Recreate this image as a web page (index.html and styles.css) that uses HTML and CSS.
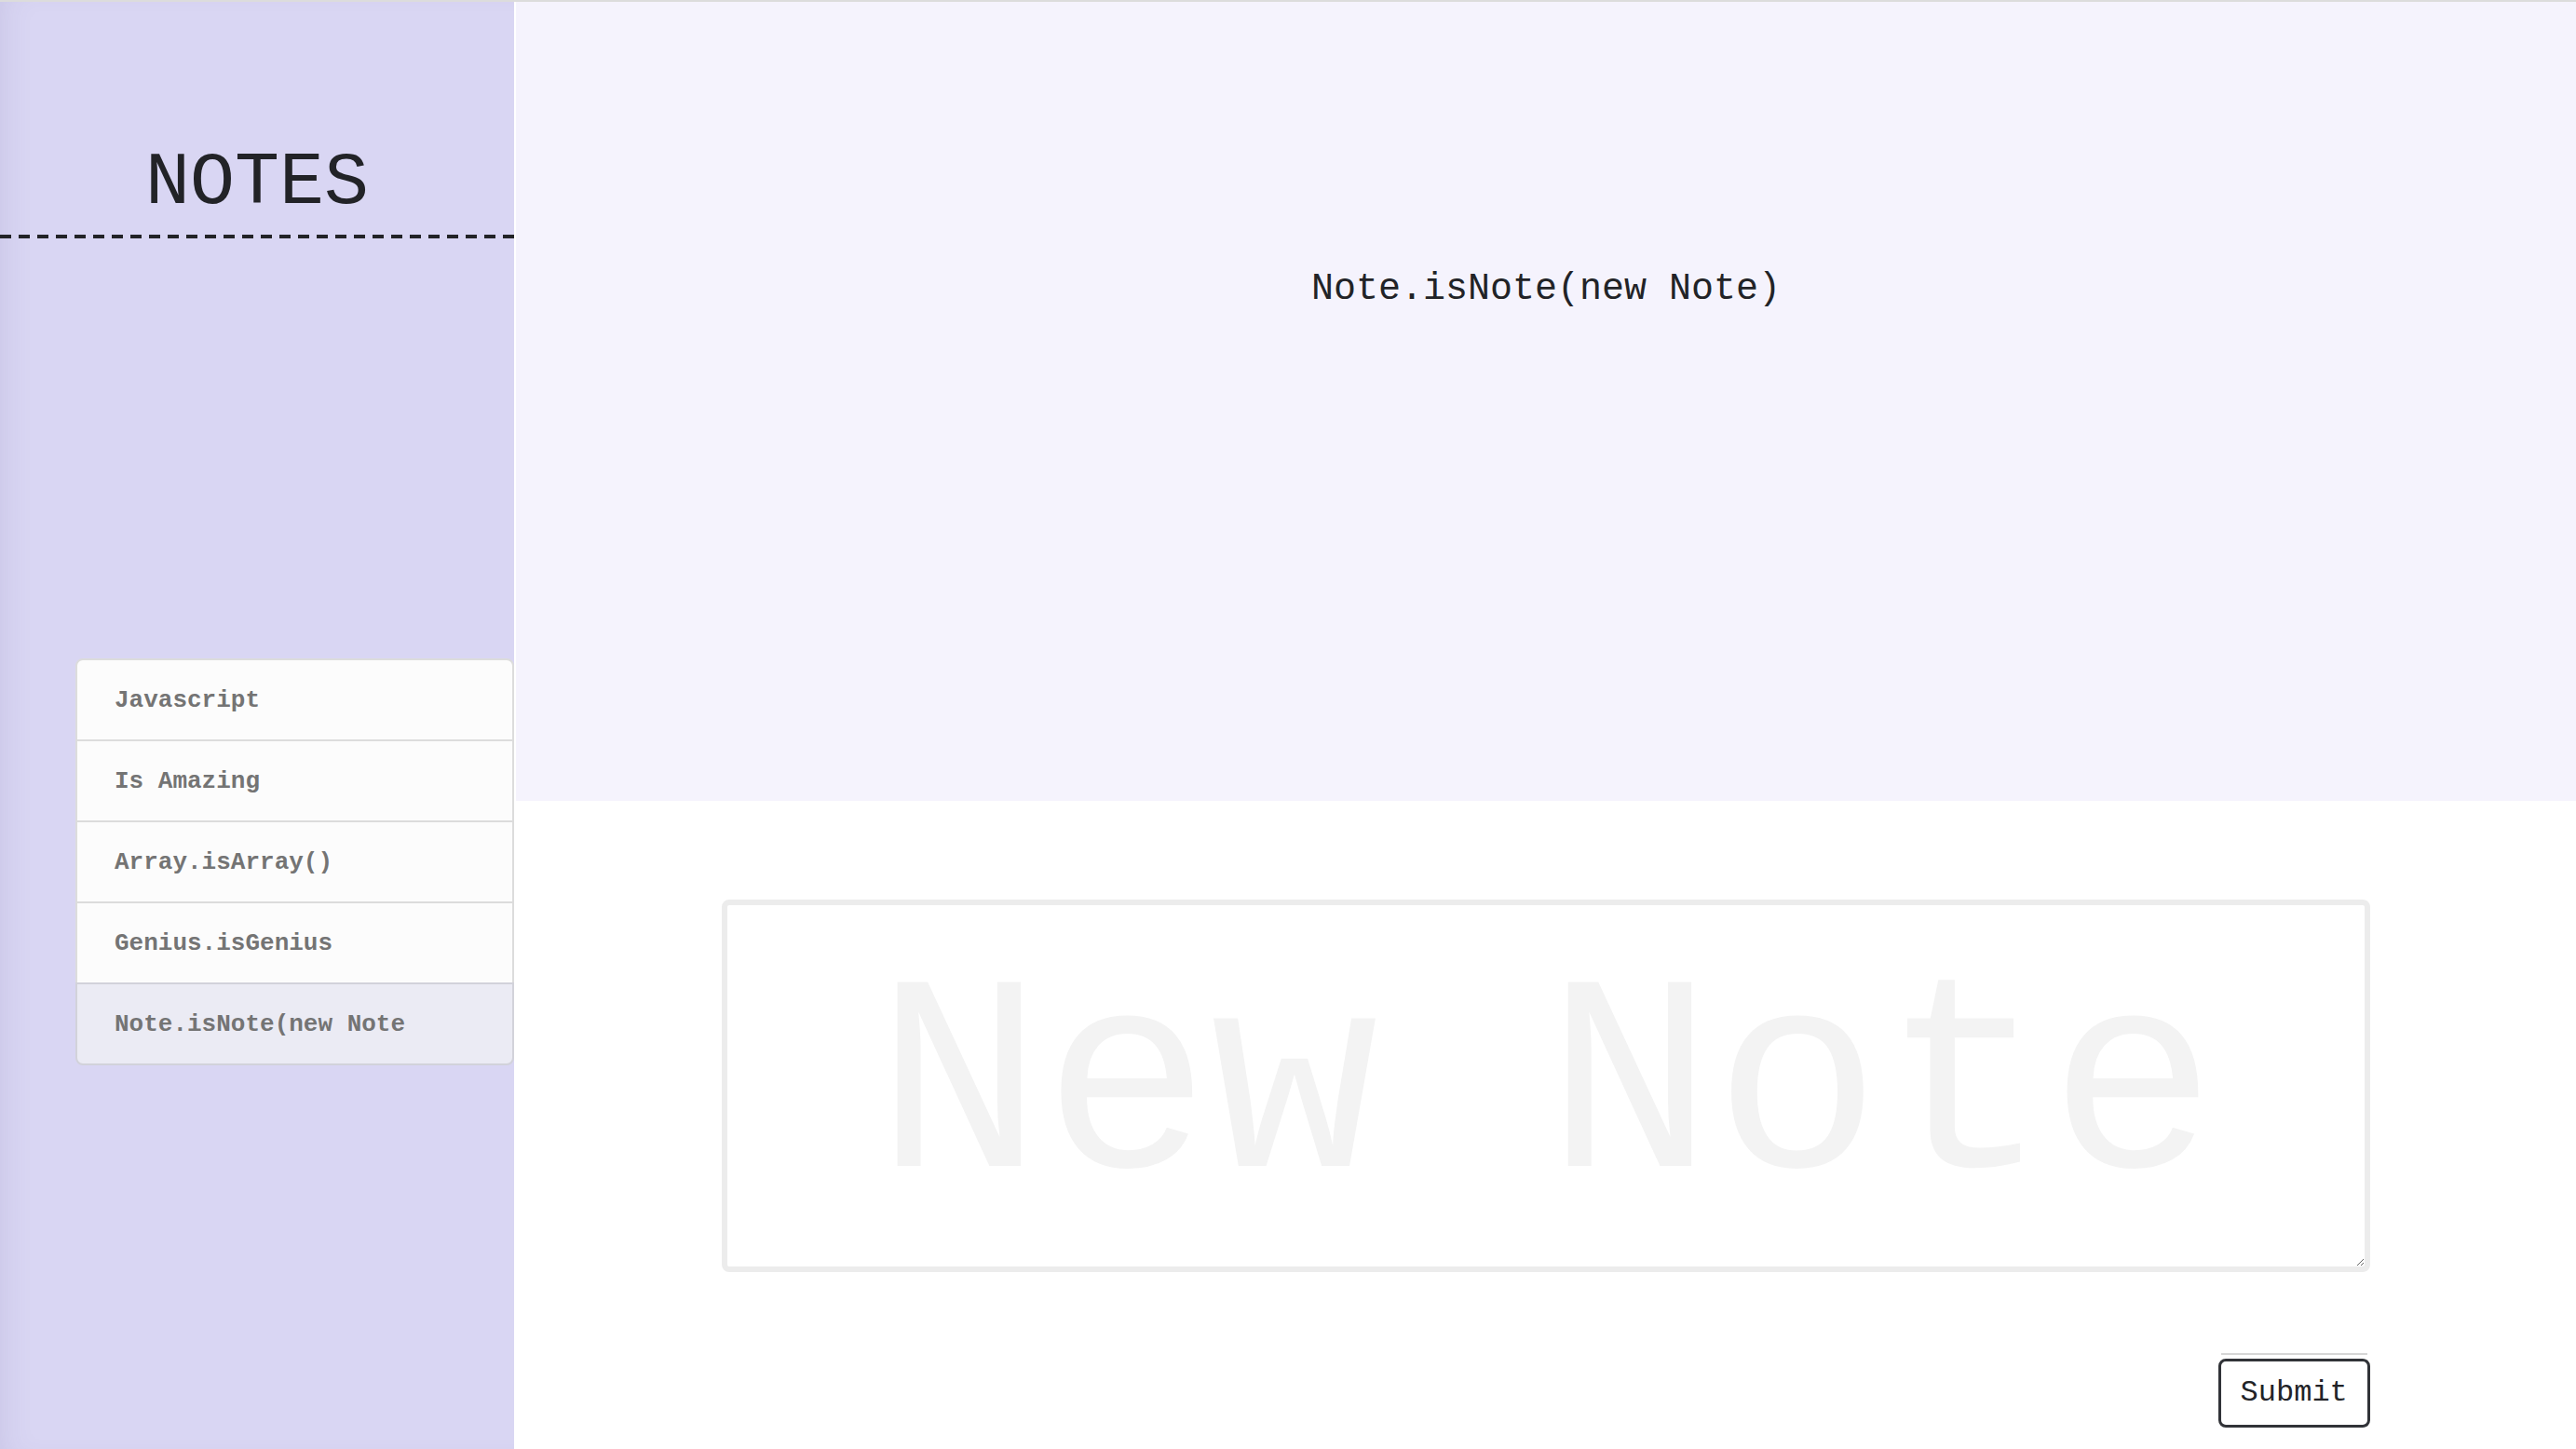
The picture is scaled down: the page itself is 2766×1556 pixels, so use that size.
FILE: index.html
```html
<!DOCTYPE html>
<html lang="en">
<head>
<meta charset="utf-8">
<title>Notes</title>
<link rel="stylesheet" href="styles.css">
</head>
<body>
<div class="app">
  <aside class="sidebar">
    <h1 class="title">NOTES</h1>
    <div class="rule"></div>
    <ul class="note-list">
      <li class="note-item">Javascript</li>
      <li class="note-item">Is Amazing</li>
      <li class="note-item">Array.isArray()</li>
      <li class="note-item">Genius.isGenius</li>
      <li class="note-item active">Note.isNote(new Note</li>
    </ul>
  </aside>
  <main class="main">
    <section class="viewer">
      <p class="viewer-text">Note.isNote(new Note)</p>
    </section>
    <form class="composer">
      <textarea class="composer-input" placeholder="New Note"></textarea>
      <div class="composer-actions">
        <button class="submit-btn" type="button">Submit</button>
      </div>
    </form>
  </main>
</div>
</body>
</html>
```

FILE: styles.css
```css
html, body {
  margin: 0;
  padding: 0;
  height: 100%;
}
body {
  box-sizing: border-box;
  border-top: 2px solid #dcdcdc;
  font-family: "Liberation Mono", "Courier New", monospace;
  color: #222327;
  background: #ffffff;
  overflow: hidden;
}
.app {
  display: flex;
  height: 1554px;
}
.sidebar {
  width: 552px;
  flex: none;
  background: #d9d6f3;
  box-shadow: inset 22px 0 36px -24px rgba(90, 80, 140, 0.16);
}
.title {
  margin: 0;
  padding: 149px 0 9px;
  font-size: 80px;
  line-height: 92px;
  font-weight: normal;
  text-align: center;
  color: #222327;
}
.rule {
  height: 4px;
  background: repeating-linear-gradient(to right, #222327 0 12px, transparent 12px 20px);
}
.note-list {
  list-style: none;
  margin: 451px 0 0 81px;
  padding: 0;
}
.note-item {
  background: #fcfcfc;
  border: 2px solid #dcdcdc;
  margin-bottom: -2px;
  padding: 28px 40px 27px;
  font-size: 26px;
  line-height: 30px;
  font-weight: bold;
  color: #747474;
}
.note-item:first-child {
  border-radius: 8px 8px 0 0;
}
.note-item:last-child {
  border-radius: 0 0 8px 8px;
  margin-bottom: 0;
}
.note-item.active {
  background: #ebebf4;
  border-color: #d2d2da;
}
.main {
  flex: 1;
  margin-left: 2px;
  display: flex;
  flex-direction: column;
}
.viewer {
  height: 858px;
  box-sizing: border-box;
  padding-top: 286px;
  background: #f5f3fd;
}
.viewer-text {
  margin: 0;
  text-align: center;
  font-size: 40px;
  line-height: 46px;
  color: #222327;
}
.composer {
  width: 80%;
  margin: 106px auto 0;
}
.composer-input {
  display: block;
  width: 100%;
  height: 400px;
  box-sizing: border-box;
  border: 6px solid #ececec;
  border-radius: 8px;
  padding: 30px 20px 0;
  font-family: inherit;
  font-size: 300px;
  line-height: 340px;
  text-align: center;
  color: #222327;
  background: #ffffff;
  outline: none;
  overflow: hidden;
}
.composer-input::placeholder {
  color: #f3f3f3;
}
.composer-actions {
  display: flex;
  justify-content: flex-end;
  margin-top: 93px;
}
.submit-btn {
  position: relative;
  font-family: inherit;
  font-size: 32px;
  line-height: 36px;
  padding: 16px 21px;
  border: 3px solid #313338;
  border-radius: 8px;
  background: #ffffff;
  color: #222327;
}
.submit-btn::before {
  content: "";
  position: absolute;
  left: 0;
  right: 0;
  top: -9px;
  height: 2px;
  background: #d6d6d6;
}
```
